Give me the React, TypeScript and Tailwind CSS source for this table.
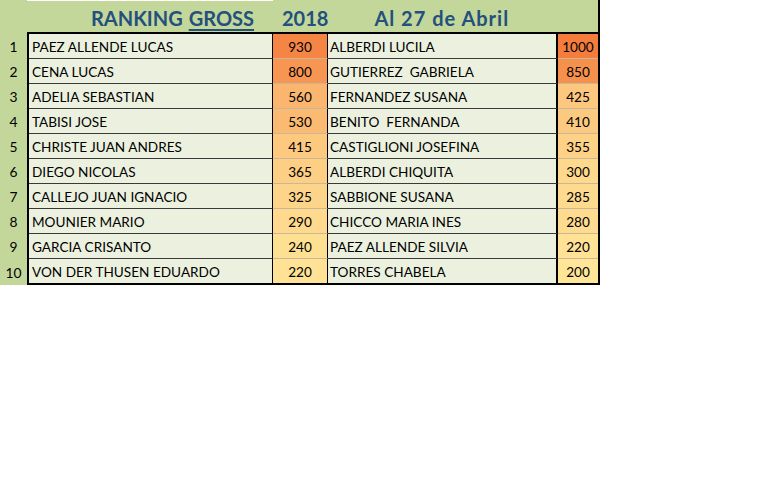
const LEFT = [
  { name: "PAEZ ALLENDE LUCAS", pts: 930 },
  { name: "CENA LUCAS", pts: 800 },
  { name: "ADELIA SEBASTIAN", pts: 560 },
  { name: "TABISI JOSE", pts: 530 },
  { name: "CHRISTE JUAN ANDRES", pts: 415 },
  { name: "DIEGO NICOLAS", pts: 365 },
  { name: "CALLEJO JUAN IGNACIO", pts: 325 },
  { name: "MOUNIER MARIO", pts: 290 },
  { name: "GARCIA CRISANTO", pts: 240 },
  { name: "VON DER THUSEN EDUARDO", pts: 220 },
];

const RIGHT = [
  { name: "ALBERDI LUCILA", pts: 1000 },
  { name: "GUTIERREZ  GABRIELA", pts: 850 },
  { name: "FERNANDEZ SUSANA", pts: 425 },
  { name: "BENITO  FERNANDA", pts: 410 },
  { name: "CASTIGLIONI JOSEFINA", pts: 355 },
  { name: "ALBERDI CHIQUITA", pts: 300 },
  { name: "SABBIONE SUSANA", pts: 285 },
  { name: "CHICCO MARIA INES", pts: 280 },
  { name: "PAEZ ALLENDE SILVIA", pts: 220 },
  { name: "TORRES CHABELA", pts: 200 },
];

// excel-like colour scale, yellow (low) -> orange (high)
function scale(v: number) {
  const lo = [255, 229, 152];
  const hi = [244, 124, 60];
  const t = Math.max(0, Math.min(1, (v - 200) / 800));
  const c = lo.map((l, i) => Math.round(l + (hi[i] - l) * t));
  return `rgb(${c[0]}, ${c[1]}, ${c[2]})`;
}

export default function App() {
  return (
    <div className="w-[762px] h-[501px] bg-white text-black" style={{ fontFamily: "Lato, 'Open Sans', sans-serif" }}>
      <div className="flex w-[600px]">
        <div className="w-[27px] bg-[#c4d79b] pt-[34px] text-[13.8px]">
          {LEFT.map((_, i) => (
            <div key={i} className={`flex items-center justify-center pt-[2px] ${i === 9 ? "h-[26px]" : "h-[25px]"}`}>
              {i + 1}
            </div>
          ))}
        </div>

        <div className="flex-1">
          <div className="h-[32px] bg-[#c4d79b] border-r-2 border-black relative">
            <div className="absolute left-0 top-0 h-px w-[246px] bg-white" />
            <div className="flex items-end h-full pb-[4px] pl-[64px] text-[20px] font-bold text-[#23507c] leading-none">
              <span>RANKING</span>
              <span className="ml-[6px] underline underline-offset-[3px] decoration-2">GROSS</span>
              <span className="ml-[28px]">2018</span>
              <span className="ml-[46px] tracking-[1px]">Al 27 de Abril</span>
            </div>
          </div>

          <div className="border-2 border-black text-[13.6px]">
            {LEFT.map((l, i) => {
              const r = RIGHT[i];
              const last = i === 9;
              return (
                <div key={i} className="flex h-[25px] last:h-[24px]">
                  <div className={`w-[244px] bg-[#ebf1de] pl-[3px] pt-[2px] flex items-center border-r border-black ${last ? "" : "border-b border-b-[#3a3a3a]"}`}>
                    {l.name}
                  </div>
                  <div
                    className={`w-[55px] pt-[2px] flex items-center justify-center border-r border-black ${last ? "" : "border-b border-b-[#c9b79a]"}`}
                    style={{ backgroundColor: scale(l.pts) }}
                  >
                    {l.pts}
                  </div>
                  <div className={`w-[230px] bg-[#ebf1de] pl-[2px] pt-[2px] flex items-center border-r-2 border-black whitespace-pre ${last ? "" : "border-b border-b-[#3a3a3a]"}`}>
                    {r.name}
                  </div>
                  <div
                    className={`flex-1 pt-[2px] flex items-center justify-center ${last ? "" : "border-b border-b-[#c9b79a]"}`}
                    style={{ backgroundColor: scale(r.pts) }}
                  >
                    {r.pts}
                  </div>
                </div>
              );
            })}
          </div>
        </div>
      </div>
    </div>
  );
}
